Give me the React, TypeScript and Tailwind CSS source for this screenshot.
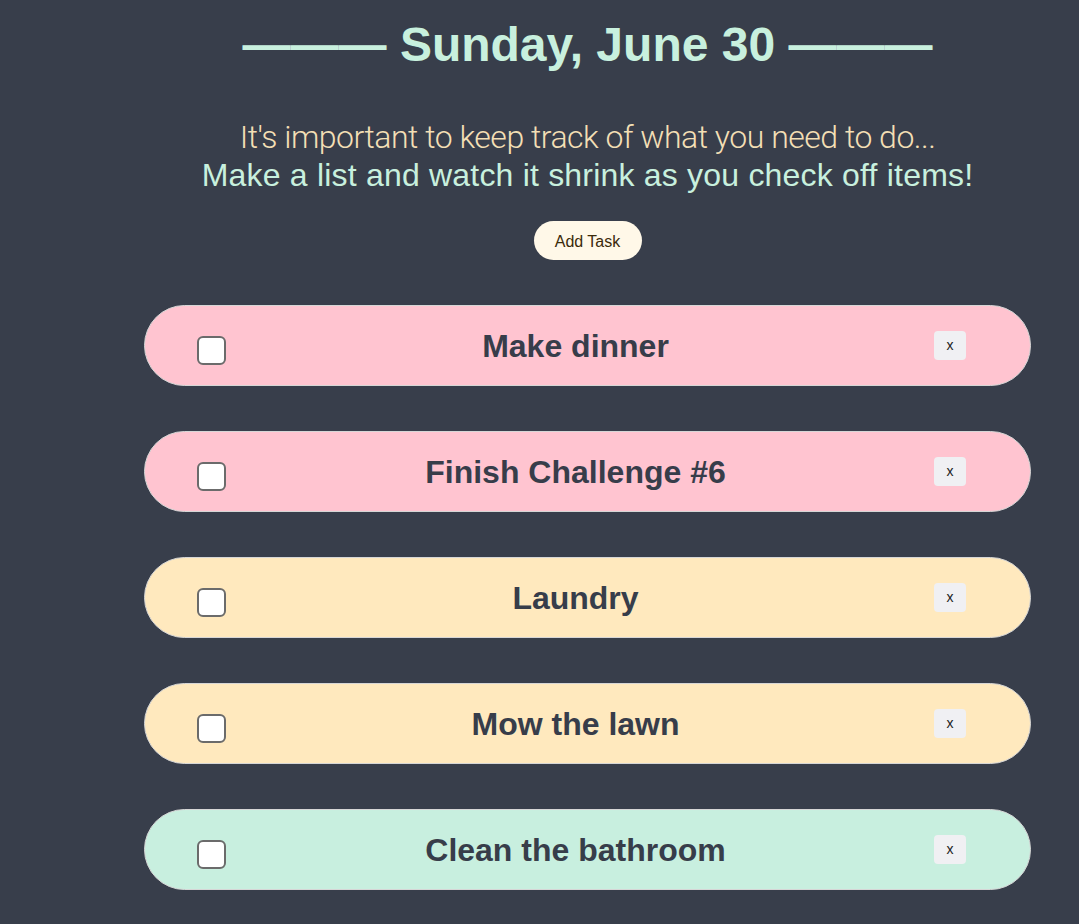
import React from "react";

const tasks = [
  { text: "Make dinner", bg: "bg-[#ffc4d0]" },
  { text: "Finish Challenge #6", bg: "bg-[#ffc4d0]" },
  { text: "Laundry", bg: "bg-[#ffe9be]" },
  { text: "Mow the lawn", bg: "bg-[#ffe9be]" },
  { text: "Clean the bathroom", bg: "bg-[#c8efdf]" },
];

export default function App() {
  return (
    <div
      className="min-h-screen bg-[#383e4b] pl-[96px] pb-[40px]"
      style={{ fontFamily: '"Liberation Sans", Arial, sans-serif' }}
    >
      <h1 className="pt-[21px] text-center text-[48px] font-bold leading-none text-[#c8f0de] whitespace-nowrap">
        ——— Sunday, June 30 ———
      </h1>
      <div className="mt-[49px] text-center text-[32px] leading-[38px] whitespace-nowrap">
        <p
          className="font-light tracking-[-0.5px] text-[#f3dfb5]"
          style={{ fontFamily: 'Roboto, "Liberation Sans", sans-serif' }}
        >
          It's important to keep track of what you need to do...
        </p>
        <p className="tracking-[0.2px] text-[#c8f0de]">
          Make a list and watch it shrink as you check off items!
        </p>
      </div>
      <div className="mt-[27px] flex justify-center">
        <button className="h-[39px] w-[108px] rounded-full bg-[#fff8e8] pt-[2px] text-[16px] text-[#3b2a0a]">
          Add Task
        </button>
      </div>
      <div className="mt-[45px] flex flex-col items-center gap-[45px]">
        {tasks.map((t) => (
          <div
            key={t.text}
            className={`flex h-[81px] w-[887px] items-center rounded-full border border-[#d6d6d6] pl-[52px] pr-[64px] ${t.bg}`}
          >
            <span className="mt-[10px] box-border block h-[29px] w-[29px] rounded-[6px] border-2 border-[#6b6b6b] bg-white" />
            <span className="mr-[9px] flex-1 text-center text-[32px] font-bold text-[#373d4a]">
              {t.text}
            </span>
            <button className="h-[29px] w-[32px] rounded-[4px] bg-[#f0f0f3] text-[14px] text-[#222]">
              x
            </button>
          </div>
        ))}
      </div>
    </div>
  );
}
